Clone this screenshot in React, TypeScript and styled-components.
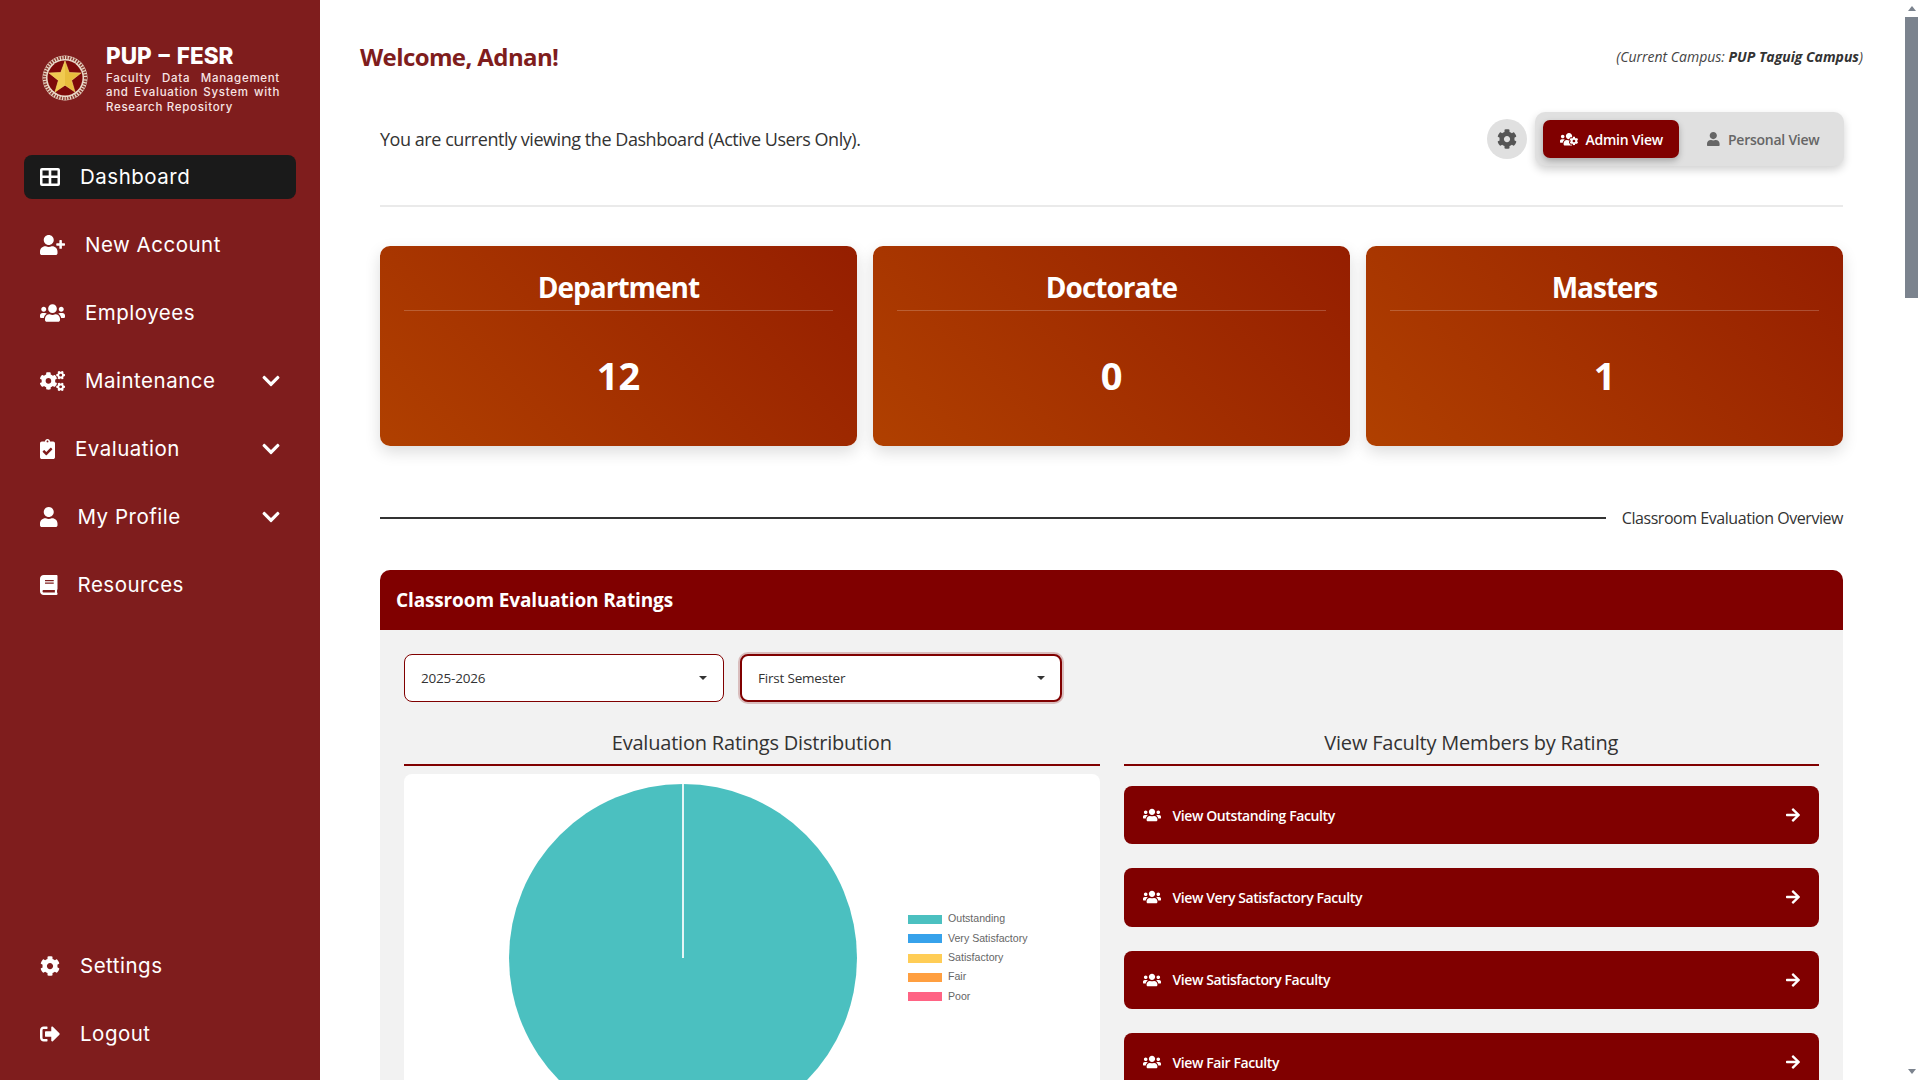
import React, { FC, ReactNode } from 'react';
import styled, { createGlobalStyle } from 'styled-components';
import {
    FaArrowRight,
    FaBook,
    FaChevronDown,
    FaClipboardCheck,
    FaCog,
    FaCogs,
    FaSignOutAlt,
    FaUser,
    FaUserPlus,
    FaUsers,
    FaUsersCog,
} from 'react-icons/fa';

const MAROON = '#800000';
const SCROLL_GRAY = '#7b838e';
const SIDEBAR_FONT = `Inter, "Noto Sans", sans-serif`;
const MAIN_FONT = `"Open Sans", "Noto Sans", sans-serif`;

const GlobalStyle = createGlobalStyle`
    * {
        box-sizing: border-box;
    }
    html,
    body {
        margin: 0;
        height: 100%;
        overflow: hidden;
        background: #fff;
    }
    #root {
        height: 100%;
    }
`;

const Shell = styled.div`
    display: flex;
    height: 100vh;
`;

const Sidebar = styled.aside`
    width: 320px;
    flex-shrink: 0;
    display: flex;
    flex-direction: column;
    background: #7f1d1d;
    color: #fff;
    font-family: ${SIDEBAR_FONT};
    padding: 0 24px 24px;
`;

const Brand = styled.div`
    display: flex;
    align-items: center;
    gap: 18px;
    height: 155px;
    padding: 0 16px 0 18px;
`;

const BrandText = styled.div`
    width: 174px;
    flex-shrink: 0;
`;

const BrandTitle = styled.div`
    font-size: 22.5px;
    font-weight: 800;
    line-height: 30px;
    word-spacing: 2px;
    white-space: nowrap;
`;

const BrandSub = styled.div`
    font-size: 11.5px;
    font-weight: 500;
    line-height: 14.6px;
    letter-spacing: 0.7px;
    text-align: justify;
    color: #f8e4e4;
`;

const Nav = styled.nav`
    display: flex;
    flex-direction: column;
    gap: 24px;
`;

const BottomNav = styled(Nav)`
    margin-top: auto;
`;

const NavItem = styled.a<{ $active?: boolean; $iconWidth: number }>`
    display: flex;
    align-items: center;
    gap: 20px;
    height: 44px;
    padding: 0 16px 1px;
    border-radius: 8px;
    background: ${(p) => (p.$active ? '#1a1a1a' : 'transparent')};
    font-size: 20.5px;
    font-weight: 400;
    letter-spacing: 0.5px;
    white-space: nowrap;
    & > svg:first-child {
        width: ${(p) => p.$iconWidth}px;
        height: 20px;
        flex-shrink: 0;
    }
`;

const Chevron = styled(FaChevronDown)`
    margin-left: auto;
    margin-right: -1px;
    width: 20px;
    height: 20px;
`;

const Main = styled.main`
    flex: 1;
    min-width: 0;
    height: 100vh;
    overflow: hidden;
    background: #fff;
    color: #333;
    font-family: ${MAIN_FONT};
`;

const ScrollRail = styled.div`
    width: 17px;
    flex-shrink: 0;
    display: flex;
    flex-direction: column;
    align-items: center;
    background: #fff;
`;

const ScrollArrow = styled.span<{ $down?: boolean }>`
    display: flex;
    align-items: center;
    justify-content: center;
    height: 17px;
    &::before {
        content: '';
        border-left: 4px solid transparent;
        border-right: 4px solid transparent;
        border-${(p) => (p.$down ? 'top' : 'bottom')}: 5px solid ${SCROLL_GRAY};
    }
`;

const ScrollThumb = styled.div`
    width: 13px;
    height: 281px;
    margin-bottom: auto;
    background: ${SCROLL_GRAY};
`;

const TopBar = styled.header`
    display: flex;
    align-items: center;
    justify-content: space-between;
    height: 36px;
    margin-top: 38px;
    padding: 0 40px;
`;

const Welcome = styled.h1`
    margin: 0;
    font-size: 24px;
    font-weight: 700;
    letter-spacing: -0.6px;
    color: #7f1d1d;
`;

const Campus = styled.div`
    font-size: 14px;
    font-style: italic;
    letter-spacing: 0;
    color: #444;
    & b {
        color: #333;
    }
`;

const Content = styled.div`
    padding: 0 60px;
`;

const IntroRow = styled.div`
    display: flex;
    align-items: center;
    justify-content: space-between;
    margin-top: 38px;
    padding-bottom: 39px;
    border-bottom: 2px solid #eaeaea;
`;

const IntroText = styled.p`
    margin: 0;
    font-size: 18px;
    letter-spacing: -0.45px;
    color: #333;
`;

const ViewControls = styled.div`
    display: flex;
    align-items: center;
    gap: 8px;
    margin-right: -1px;
`;

const GearButton = styled.button`
    display: flex;
    align-items: center;
    justify-content: center;
    width: 40px;
    height: 40px;
    padding: 0;
    border: 0;
    border-radius: 50%;
    background: #e0e0e0;
    color: #555;
    font-size: 20px;
`;

const ViewToggle = styled.div`
    display: flex;
    justify-content: space-between;
    width: 309px;
    height: 54px;
    padding: 8px;
    border-radius: 10px;
    background: #e0e0e0;
    box-shadow: 0 4px 8px rgba(0, 0, 0, 0.18);
`;

const ViewButton = styled.button<{ $active?: boolean }>`
    display: flex;
    align-items: center;
    gap: 8px;
    height: 38px;
    padding: 0 16.5px;
    border: 0;
    border-radius: 7px;
    background: ${(p) => (p.$active ? MAROON : 'transparent')};
    color: ${(p) => (p.$active ? '#fff' : '#666')};
    box-shadow: ${(p) => (p.$active ? '0 3px 6px rgba(0, 0, 0, 0.25)' : 'none')};
    font-family: ${MAIN_FONT};
    font-size: 14px;
    font-weight: 600;
    letter-spacing: -0.25px;
    & svg {
        width: ${(p) => (p.$active ? '18px' : '12.6px')};
        height: 14.4px;
    }
`;

const StatGrid = styled.section`
    display: grid;
    grid-template-columns: repeat(3, 1fr);
    gap: 16px;
    margin-top: 39px;
`;

const StatCard = styled.div`
    display: flex;
    flex-direction: column;
    height: 200px;
    padding: 20px 24px 8px;
    border-radius: 10px;
    background: linear-gradient(45deg, #b04000, #951e00);
    box-shadow: 0 6px 16px rgba(0, 0, 0, 0.14);
    color: #fff;
`;

const StatTitle = styled.div`
    height: 45px;
    border-bottom: 1px solid rgba(255, 255, 255, 0.2);
    font-size: 28px;
    font-weight: 700;
    line-height: 42px;
    letter-spacing: -1px;
    text-align: center;
`;

const StatValue = styled.div`
    flex: 1;
    display: flex;
    align-items: center;
    justify-content: center;
    font-size: 38px;
    font-weight: 700;
`;

const OverviewRule = styled.div`
    display: flex;
    align-items: center;
    gap: 16px;
    height: 24px;
    margin-top: 60px;
    font-size: 16px;
    letter-spacing: -0.45px;
    white-space: nowrap;
    &::before {
        content: '';
        flex: 1;
        height: 2px;
        background: #333;
    }
`;

const Panel = styled.section`
    margin-top: 40px;
    border-radius: 10px 10px 0 0;
    background: #f2f2f2;
`;

const PanelHeader = styled.h2`
    display: flex;
    align-items: center;
    height: 60px;
    margin: 0;
    padding: 0 16px;
    border-radius: 10px 10px 0 0;
    background: ${MAROON};
    color: #fff;
    font-size: 19px;
    font-weight: 700;
    letter-spacing: -0.13px;
`;

const PanelBody = styled.div`
    padding: 24px;
`;

const Filters = styled.div`
    display: flex;
    gap: 16px;
    height: 48px;
`;

const SelectWrap = styled.div`
    position: relative;
    width: 320px;
    &::after {
        content: '';
        position: absolute;
        right: 17px;
        top: 22px;
        border: 4px solid transparent;
        border-top-color: #333;
        border-bottom-width: 0;
    }
    &:nth-child(2) {
        width: 322px;
    }
`;

const Select = styled.select<{ $focused?: boolean }>`
    appearance: none;
    width: 100%;
    height: 100%;
    padding: 0 16px;
    border: ${(p) => (p.$focused ? '2px' : '1px')} solid ${MAROON};
    border-radius: 8px;
    background: #fff;
    box-shadow: ${(p) => (p.$focused ? '0 0 0 2px rgba(128, 0, 0, 0.22)' : 'none')};
    color: #333;
    font-family: ${MAIN_FONT};
    font-size: 13.5px;
    letter-spacing: -0.2px;
`;

const Columns = styled.div`
    display: grid;
    grid-template-columns: repeat(2, 1fr);
    gap: 24px;
    margin-top: 26px;
`;

const SectionTitle = styled.h3`
    height: 38px;
    margin: 0;
    padding-bottom: 6px;
    border-bottom: 2px solid ${MAROON};
    color: #333;
    font-size: 20px;
    font-weight: 500;
    line-height: 29px;
    letter-spacing: -0.2px;
    text-align: center;
`;

const ChartCard = styled.div`
    display: flex;
    align-items: center;
    gap: 51px;
    margin-top: 8px;
    padding: 10px 0 10px 105px;
    border-radius: 8px;
    background: #fff;
`;

const Pie = styled.svg`
    flex-shrink: 0;
    width: 348px;
    height: 348px;
`;

const Legend = styled.ul`
    display: flex;
    flex-direction: column;
    gap: 5.4px;
    margin: 0;
    padding: 0;
    list-style: none;
    color: #666;
    font-family: 'Liberation Sans', Arial, sans-serif;
    font-size: 10.6px;
    line-height: 14px;
`;

const LegendRow = styled.li`
    display: flex;
    align-items: center;
    gap: 6px;
    height: 14px;
`;

const LegendLabel = styled.span`
    margin-bottom: 2px;
`;

const Swatch = styled.span<{ $color: string }>`
    width: 34px;
    height: 9px;
    background: ${(p) => p.$color};
`;

const RatingList = styled.div`
    display: flex;
    flex-direction: column;
    gap: 24px;
    margin-top: 20px;
`;

const RatingButton = styled.a`
    display: flex;
    align-items: center;
    gap: 12px;
    height: 58.33px;
    padding: 0 19px;
    border-radius: 8px;
    background: ${MAROON};
    color: #fff;
    font-size: 14px;
    font-weight: 600;
    letter-spacing: -0.4px;
    & svg:first-child {
        width: 18px;
        height: 18px;
    }
    & svg:last-child {
        width: 14px;
        height: 16px;
        margin-left: auto;
    }
`;

const LEGEND = [
    { label: 'Outstanding', color: '#4bc0c0' },
    { label: 'Very Satisfactory', color: '#36a2eb' },
    { label: 'Satisfactory', color: '#ffcd56' },
    { label: 'Fair', color: '#ff9f40' },
    { label: 'Poor', color: '#ff6384' },
];

const RATINGS = ['Outstanding', 'Very Satisfactory', 'Satisfactory', 'Fair'];

const STATS = [
    { title: 'Department', value: 12 },
    { title: 'Doctorate', value: 0 },
    { title: 'Masters', value: 1 },
];

const Seal: FC = () => (
    <svg width='46' height='46' viewBox='0 0 46 46' style={{ flexShrink: 0 }}>
        <circle cx='23' cy='23' r='22.5' fill='#e9d8c8' />
        <circle cx='23' cy='23' r='20.5' fill='none' stroke='#8c3b30' strokeWidth='3' strokeDasharray='1.5 1.2' />
        <circle cx='23' cy='23' r='17.5' fill='#7d0a0a' />
        <polygon
            points='23,6 27.2,17.5 39,18 29.6,25.4 33,37 23,30.2 13,37 16.4,25.4 7,18 18.8,17.5'
            fill='#e8bd3c'
            stroke='#f6dc7a'
            strokeWidth='0.6'
        />
        <polygon points='23,6 23,30.2 13,37 16.4,25.4 7,18 18.8,17.5' fill='#f3d05a' opacity='0.7' />
    </svg>
);

const DashboardIcon: FC = () => (
    <svg viewBox='0 0 20 18' fill='#fff'>
        <path
            fillRule='evenodd'
            d='M2 0h16a2 2 0 0 1 2 2v14a2 2 0 0 1-2 2H2a2 2 0 0 1-2-2V2a2 2 0 0 1 2-2zM2.500 2.500v5h6.200v-5zM11.300 2.500v5h6.200v-5zM2.500 10v5.500h6.200V10zM11.300 10v5.500h6.200V10z'
        />
    </svg>
);

const MenuLink: FC<{ icon: ReactNode; iconWidth: number; label: string; active?: boolean; expandable?: boolean }> = ({
    icon,
    iconWidth,
    label,
    active,
    expandable,
}) => (
    <NavItem $active={active} $iconWidth={iconWidth}>
        {icon}
        <span>{label}</span>
        {expandable && <Chevron />}
    </NavItem>
);

const App: FC = () => {
    return (
        <Shell>
            <GlobalStyle />
            <Sidebar>
                <Brand>
                    <Seal />
                    <BrandText>
                        <BrandTitle>PUP – FESR</BrandTitle>
                        <BrandSub>Faculty Data Management and Evaluation System with Research Repository</BrandSub>
                    </BrandText>
                </Brand>
                <Nav>
                    <MenuLink icon={<DashboardIcon />} iconWidth={20} label='Dashboard' active />
                    <MenuLink icon={<FaUserPlus />} iconWidth={25} label='New Account' />
                    <MenuLink icon={<FaUsers />} iconWidth={25} label='Employees' />
                    <MenuLink icon={<FaCogs />} iconWidth={25} label='Maintenance' expandable />
                    <MenuLink icon={<FaClipboardCheck />} iconWidth={15} label='Evaluation' expandable />
                    <MenuLink icon={<FaUser />} iconWidth={17.5} label='My Profile' expandable />
                    <MenuLink icon={<FaBook />} iconWidth={17.5} label='Resources' />
                </Nav>
                <BottomNav>
                    <MenuLink icon={<FaCog />} iconWidth={20} label='Settings' />
                    <MenuLink icon={<FaSignOutAlt />} iconWidth={20} label='Logout' />
                </BottomNav>
            </Sidebar>
            <Main>
                <TopBar>
                    <Welcome>Welcome, Adnan!</Welcome>
                    <Campus>
                        (Current Campus: <b>PUP Taguig Campus</b>)
                    </Campus>
                </TopBar>
                <Content>
                    <IntroRow>
                        <IntroText>You are currently viewing the Dashboard (Active Users Only).</IntroText>
                        <ViewControls>
                            <GearButton>
                                <FaCog />
                            </GearButton>
                            <ViewToggle>
                                <ViewButton $active>
                                    <FaUsersCog />
                                    Admin View
                                </ViewButton>
                                <ViewButton>
                                    <FaUser />
                                    Personal View
                                </ViewButton>
                            </ViewToggle>
                        </ViewControls>
                    </IntroRow>
                    <StatGrid>
                        {STATS.map((stat) => (
                            <StatCard key={stat.title}>
                                <StatTitle>{stat.title}</StatTitle>
                                <StatValue>{stat.value}</StatValue>
                            </StatCard>
                        ))}
                    </StatGrid>
                    <OverviewRule>Classroom Evaluation Overview</OverviewRule>
                    <Panel>
                        <PanelHeader>Classroom Evaluation Ratings</PanelHeader>
                        <PanelBody>
                            <Filters>
                                <SelectWrap>
                                    <Select defaultValue='2025-2026'>
                                        <option>2025-2026</option>
                                    </Select>
                                </SelectWrap>
                                <SelectWrap>
                                    <Select $focused defaultValue='First Semester'>
                                        <option>First Semester</option>
                                    </Select>
                                </SelectWrap>
                            </Filters>
                            <Columns>
                                <div>
                                    <SectionTitle>Evaluation Ratings Distribution</SectionTitle>
                                    <ChartCard>
                                        <Pie viewBox='0 0 348 348'>
                                            <circle cx='174' cy='174' r='174' fill='#4bc0c0' />
                                            <line x1='174' y1='0' x2='174' y2='174' stroke='#fff' strokeWidth='2' opacity='0.85' />
                                        </Pie>
                                        <Legend>
                                            {LEGEND.map((item) => (
                                                <LegendRow key={item.label}>
                                                    <Swatch $color={item.color} />
                                                    <LegendLabel>{item.label}</LegendLabel>
                                                </LegendRow>
                                            ))}
                                        </Legend>
                                    </ChartCard>
                                </div>
                                <div>
                                    <SectionTitle>View Faculty Members by Rating</SectionTitle>
                                    <RatingList>
                                        {RATINGS.map((rating) => (
                                            <RatingButton key={rating}>
                                                <FaUsers />
                                                <span>View {rating} Faculty</span>
                                                <FaArrowRight />
                                            </RatingButton>
                                        ))}
                                    </RatingList>
                                </div>
                            </Columns>
                        </PanelBody>
                    </Panel>
                </Content>
            </Main>
            <ScrollRail>
                <ScrollArrow />
                <ScrollThumb />
                <ScrollArrow $down />
            </ScrollRail>
        </Shell>
    );
};

export default App;
